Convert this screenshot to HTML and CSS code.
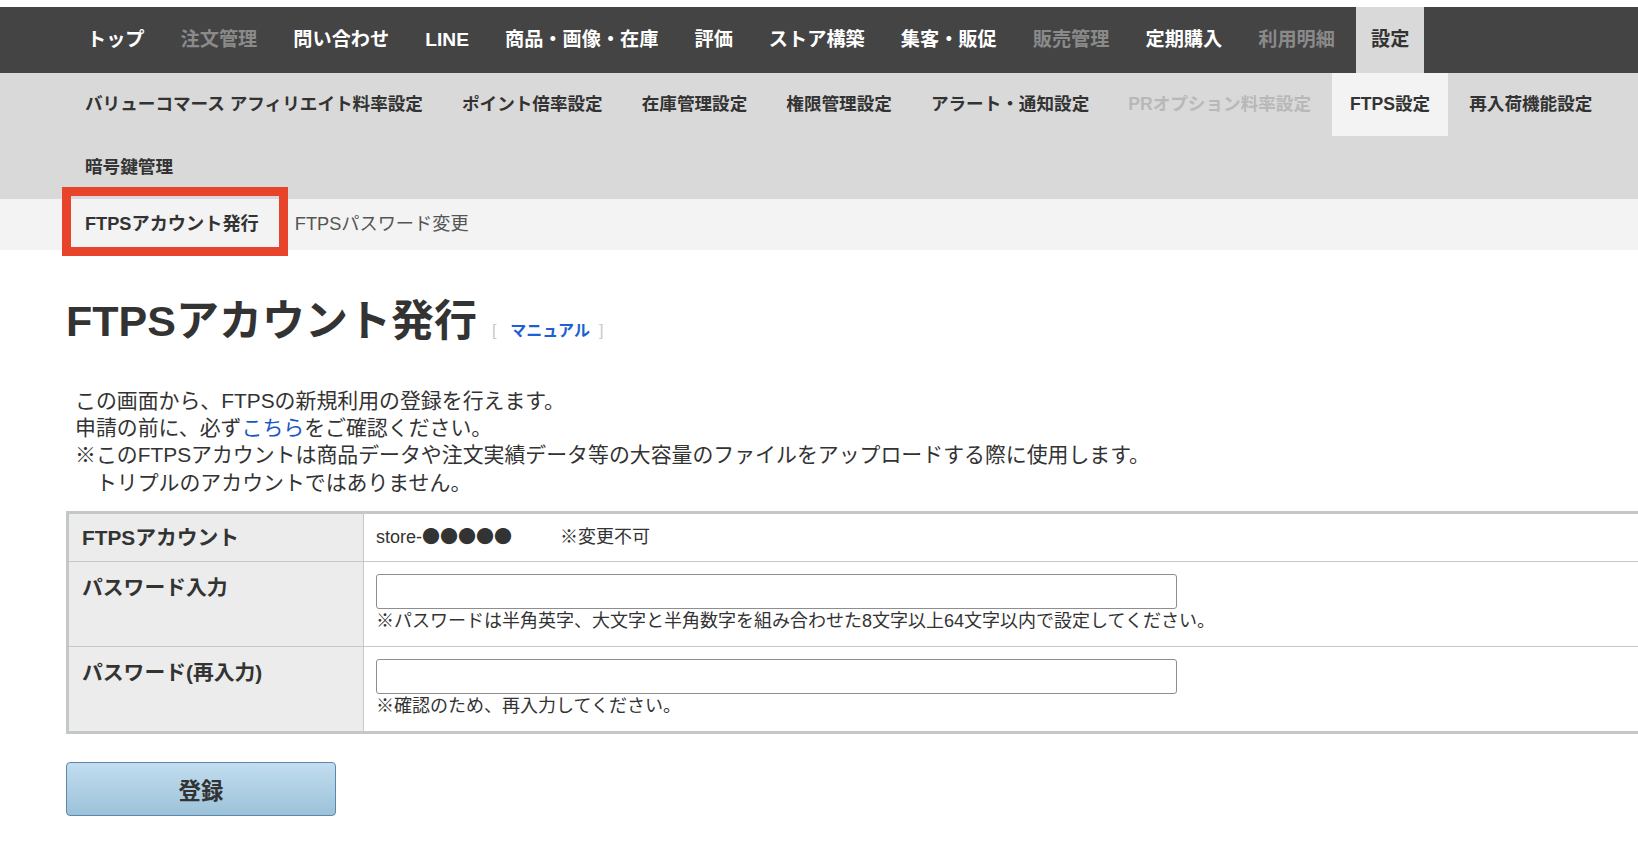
FILE: index.html
```html
<!DOCTYPE html>
<html lang="ja">
<head>
    <meta charset="utf-8">
    <title>FTPSアカウント発行</title>
    <link rel="stylesheet" href="styles.css">
</head>
<body>
    <div class="header">
        <ul class="global-nav">
            <li><a href="#">トップ</a></li>
            <li class="disabled"><a>注文管理</a></li>
            <li><a href="#">問い合わせ</a></li>
            <li><a href="#">LINE</a></li>
            <li><a href="#">商品・画像・在庫</a></li>
            <li><a href="#">評価</a></li>
            <li><a href="#">ストア構築</a></li>
            <li><a href="#">集客・販促</a></li>
            <li class="disabled"><a>販売管理</a></li>
            <li><a href="#">定期購入</a></li>
            <li class="disabled"><a>利用明細</a></li>
            <li class="current"><a href="#">設定</a></li>
        </ul>
        <ul class="sub-nav">
            <li><a href="#">バリューコマース アフィリエイト料率設定</a></li>
            <li><a href="#">ポイント倍率設定</a></li>
            <li><a href="#">在庫管理設定</a></li>
            <li><a href="#">権限管理設定</a></li>
            <li><a href="#">アラート・通知設定</a></li>
            <li class="disabled"><a>PRオプション料率設定</a></li>
            <li class="current"><a href="#">FTPS設定</a></li>
            <li><a href="#">再入荷機能設定</a></li>
            <li><a href="#">暗号鍵管理</a></li>
        </ul>
        <ul class="tab-nav">
            <li class="current"><a href="#">FTPSアカウント発行</a><span class="highlight"></span></li>
            <li><a href="#">FTPSパスワード変更</a></li>
        </ul>
    </div>

    <div class="content">
        <h1>FTPSアカウント発行<span class="manual">[<a href="#">マニュアル</a>]</span></h1>

        <div class="intro">
            <p>この画面から、FTPSの新規利用の登録を行えます。</p>
            <p>申請の前に、必ず<a href="#">こちら</a>をご確認ください。</p>
            <p>※このFTPSアカウントは商品データや注文実績データ等の大容量のファイルをアップロードする際に使用します。</p>
            <p class="indent">トリプルのアカウントではありません。</p>
        </div>

        <form class="ftps-form">
            <table class="form-table">
                <tr class="account-row">
                    <th>FTPSアカウント</th>
                    <td>store-<span class="dots">●●●●●</span><span class="note">※変更不可</span></td>
                </tr>
                <tr>
                    <th>パスワード入力</th>
                    <td>
                        <input type="password" name="password">
                        <div class="hint">※パスワードは半角英字、大文字と半角数字を組み合わせた8文字以上64文字以内で設定してください。</div>
                    </td>
                </tr>
                <tr class="last">
                    <th>パスワード(再入力)</th>
                    <td>
                        <input type="password" name="password_confirm">
                        <div class="hint">※確認のため、再入力してください。</div>
                    </td>
                </tr>
            </table>
            <button type="submit" class="submit-btn">登録</button>
        </form>
    </div>
</body>
</html>
```

FILE: styles.css
```css
html {
    overflow-x: hidden;
}
body {
    margin: 0;
    font-family: "Liberation Sans", "Noto Sans CJK JP", sans-serif;
    color: #333;
    background: #fff;
}
ul {
    list-style: none;
    margin: 0;
    padding: 0;
}
a {
    color: inherit;
    text-decoration: none;
}

/* global navigation */
.global-nav {
    display: flex;
    margin-top: 7px;
    padding-left: 72px;
    height: 66px;
    background: #444;
}
.global-nav li {
    margin-right: 6px;
}
.global-nav a {
    display: block;
    padding: 0 15px;
    line-height: 66px;
    font-size: 19.2px;
    font-weight: bold;
    color: #fff;
}
.global-nav .disabled a {
    color: #8a8a8a;
}
.global-nav .current a {
    background: #d9d9d9;
    color: #333;
}

/* second level */
.sub-nav {
    display: flex;
    flex-wrap: wrap;
    padding-left: 67px;
    background: #d9d9d9;
}
.sub-nav li {
    margin-right: 3px;
}
.sub-nav a {
    display: block;
    padding: 0 18px;
    line-height: 63px;
    font-size: 17.6px;
    font-weight: bold;
    color: #333;
}
.sub-nav .disabled a {
    color: #b8b8b8;
}
.sub-nav .current a {
    background: #f3f3f3;
}

/* third level */
.tab-nav {
    display: flex;
    padding-left: 67px;
    height: 51px;
    background: #f3f3f3;
}
.tab-nav li {
    position: relative;
}
.tab-nav a {
    display: block;
    padding: 0 18px;
    line-height: 51px;
    font-size: 18.2px;
    color: #555;
}
.tab-nav .current a {
    font-weight: bold;
    color: #333;
}
.tab-nav .highlight {
    position: absolute;
    top: -12px;
    left: -5px;
    right: -11px;
    bottom: -6px;
    border: 9px solid #e8432b;
}

/* content */
.content {
    padding-left: 66px;
}
h1 {
    margin: 46px 0 0;
    font-size: 43px;
    line-height: 50px;
    font-weight: bold;
    color: #333;
}
.manual {
    margin-left: 15px;
    font-size: 16px;
    line-height: 1;
    font-weight: normal;
    color: #c8c8c8;
}
.manual a {
    margin: 0 9px 0 14px;
    font-weight: bold;
    color: #1d5fd6;
}
.intro {
    margin-top: 41px;
    padding-left: 9px;
    font-size: 20.9px;
    line-height: 27.2px;
}
.intro p {
    margin: 0;
}
.intro .indent {
    padding-left: 1em;
}
.intro a {
    color: #1a56c8;
}

/* form table */
.form-table {
    width: 1600px;
    margin-top: 15px;
    border: 3px solid #c3c8c6;
    border-spacing: 0;
}
.form-table th {
    width: 269px;
    padding: 12px 12px 13px 13px;
    text-align: left;
    vertical-align: top;
    font-size: 20.8px;
    line-height: 27px;
    font-weight: bold;
    background: #ebeceb;
    border-right: 1px solid #c8c8c8;
    border-bottom: 1px solid #c8c8c8;
}
.form-table td {
    padding: 12px 12px 13px;
    vertical-align: top;
    font-size: 18px;
    line-height: 27px;
    border-bottom: 1px solid #c8c8c8;
}
.form-table .account-row th,
.form-table .account-row td {
    padding-top: 10px;
    padding-bottom: 10px;
}
.form-table .last th,
.form-table .last td {
    border-bottom: none;
}
.dots {
    font-family: "Noto Sans CJK JP", sans-serif;
    line-height: 1;
}
.note {
    margin-left: 48px;
}
.form-table input {
    display: block;
    box-sizing: border-box;
    width: 801px;
    height: 35px;
    margin: 0;
    border: 1px solid #8e8e8e;
    border-radius: 3px;
    background: #fff;
}
.hint {
    line-height: 24px;
}

.submit-btn {
    display: block;
    margin-top: 28px;
    width: 270px;
    height: 54px;
    border: 1px solid #5b87ae;
    border-radius: 4px;
    background: linear-gradient(#c2ddef, #9cc2d9);
    font-family: inherit;
    font-size: 22.4px;
    font-weight: bold;
    color: #333;
    cursor: pointer;
}
```
